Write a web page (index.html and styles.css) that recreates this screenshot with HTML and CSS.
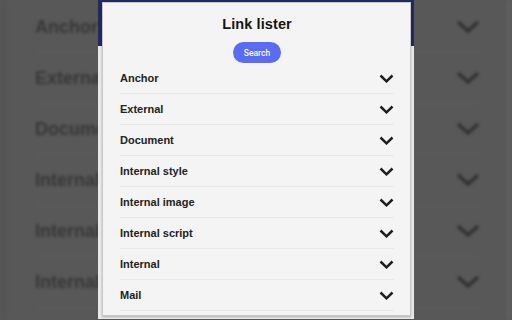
FILE: index.html
```html
<!DOCTYPE html>
<html>
<head>
<meta charset="utf-8">
<link rel="stylesheet" href="styles.css">
</head>
<body>
<div class="backdrop">
  <div class="bg-list">
    <div class="bg-row"><span>Anchor</span><svg class="bg-chev" viewBox="0 0 24 14"><polyline points="2,2 12,11 22,2"/></svg></div>
    <div class="bg-row"><span>External</span><svg class="bg-chev" viewBox="0 0 24 14"><polyline points="2,2 12,11 22,2"/></svg></div>
    <div class="bg-row"><span>Document</span><svg class="bg-chev" viewBox="0 0 24 14"><polyline points="2,2 12,11 22,2"/></svg></div>
    <div class="bg-row"><span>Internal</span><svg class="bg-chev" viewBox="0 0 24 14"><polyline points="2,2 12,11 22,2"/></svg></div>
    <div class="bg-row"><span>Internal</span><svg class="bg-chev" viewBox="0 0 24 14"><polyline points="2,2 12,11 22,2"/></svg></div>
    <div class="bg-row"><span>Internal</span><svg class="bg-chev" viewBox="0 0 24 14"><polyline points="2,2 12,11 22,2"/></svg></div>
  </div>
</div>
<div class="window">
  <div class="card">
    <h1 class="title">Link lister</h1>
    <button class="search">Search</button>
    <ul class="list">
      <li class="row"><span>Anchor</span><svg class="chev" viewBox="0 0 15 9"><polyline points="1.5,1.5 7.5,7.3 13.5,1.5"/></svg></li>
      <li class="row"><span>External</span><svg class="chev" viewBox="0 0 15 9"><polyline points="1.5,1.5 7.5,7.3 13.5,1.5"/></svg></li>
      <li class="row"><span>Document</span><svg class="chev" viewBox="0 0 15 9"><polyline points="1.5,1.5 7.5,7.3 13.5,1.5"/></svg></li>
      <li class="row"><span>Internal style</span><svg class="chev" viewBox="0 0 15 9"><polyline points="1.5,1.5 7.5,7.3 13.5,1.5"/></svg></li>
      <li class="row"><span>Internal image</span><svg class="chev" viewBox="0 0 15 9"><polyline points="1.5,1.5 7.5,7.3 13.5,1.5"/></svg></li>
      <li class="row"><span>Internal script</span><svg class="chev" viewBox="0 0 15 9"><polyline points="1.5,1.5 7.5,7.3 13.5,1.5"/></svg></li>
      <li class="row"><span>Internal</span><svg class="chev" viewBox="0 0 15 9"><polyline points="1.5,1.5 7.5,7.3 13.5,1.5"/></svg></li>
      <li class="row"><span>Mail</span><svg class="chev" viewBox="0 0 15 9"><polyline points="1.5,1.5 7.5,7.3 13.5,1.5"/></svg></li>
    </ul>
  </div>
</div>
</body>
</html>
```
FILE: styles.css
```css
html, body {
  margin: 0;
  padding: 0;
  width: 512px;
  height: 320px;
  overflow: hidden;
  background: #585858;
  font-family: "Liberation Sans", Arial, sans-serif;
}
.backdrop {
  width: 512px;
  height: 320px;
  box-sizing: border-box;
  border-left: 7px solid #555;
  border-right: 6px solid #5d5d5d;
  filter: blur(1.4px);
}
.bg-list {
  display: flex;
  flex-direction: column;
  padding: 2px 0 0 28px;
  width: 445px;
}
.bg-row {
  height: 50px;
  border-bottom: 1px solid #5f5f5f;
  display: flex;
  align-items: center;
  justify-content: space-between;
  font-weight: bold;
  font-size: 18px;
  color: #373737;
}
.bg-chev {
  width: 24px;
  height: 14px;
}
.bg-chev polyline {
  fill: none;
  stroke: #303030;
  stroke-width: 3.5;
}
.window {
  position: absolute;
  left: 98px;
  top: 0;
  width: 316px;
  height: 319px;
  background: linear-gradient(#1f2b5e 0, #1f2b5e 46px, #e9e9e9 46px);
  padding: 2px 3px 0 4px;
  box-sizing: border-box;
}
.card {
  background: #f4f4f4;
  height: 314px;
  box-sizing: border-box;
  border: 1px solid #c8c8c8;
  box-shadow: 0 1px 2px rgba(0,0,0,0.25);
  display: flex;
  flex-direction: column;
  align-items: center;
  padding: 11px 16px 0 17px;
}
.title {
  margin: 0;
  font-size: 14.5px;
  line-height: 20px;
  font-weight: bold;
  color: #151515;
  letter-spacing: 0.1px;
}
.search {
  margin-top: 8px;
  width: 48px;
  height: 21px;
  border: none;
  border-radius: 11px;
  background: #5a6cf6;
  color: #fff;
  font-family: Roboto, "Liberation Sans", sans-serif;
  font-weight: 500;
  font-size: 8.5px;
  padding: 0;
}
.list {
  list-style: none;
  margin: 0;
  padding: 0;
  align-self: stretch;
}
.row {
  height: 30px;
  border-bottom: 1px solid #e8e8e8;
  display: flex;
  align-items: center;
  justify-content: space-between;
  font-size: 11px;
  font-weight: bold;
  color: #222;
}
.chev {
  width: 15px;
  height: 9px;
}
.chev polyline {
  fill: none;
  stroke: #1e1e1e;
  stroke-width: 2.5;
}
```
